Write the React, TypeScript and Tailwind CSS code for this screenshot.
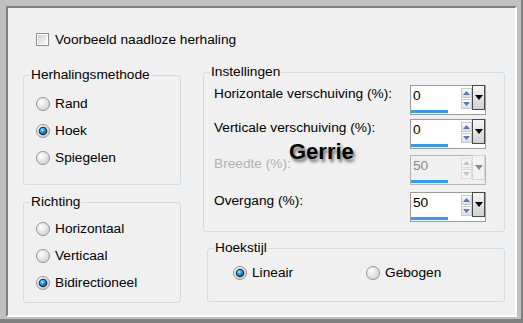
import React from 'react';

const font = { fontFamily: '"Liberation Sans", Arial, sans-serif' };

function Radio({ checked }: { checked?: boolean }) {
    return (
        <svg width="14" height="14" viewBox="0 0 14 14" className="shrink-0">
            <defs>
                <radialGradient id="rOff" cx="35%" cy="35%" r="75%">
                    <stop offset="0%" stopColor="#ffffff" />
                    <stop offset="100%" stopColor="#cfcfcf" />
                </radialGradient>
                <radialGradient id="rOn" cx="40%" cy="35%" r="70%">
                    <stop offset="0%" stopColor="#b8ecff" />
                    <stop offset="45%" stopColor="#2b9be0" />
                    <stop offset="100%" stopColor="#0a4c8c" />
                </radialGradient>
            </defs>
            <circle cx="7" cy="7" r="6.5" fill="url(#rOff)" stroke="#939393" />
            {checked && (
                <>
                    <circle cx="7" cy="7" r="4.3" fill="#1b2c3c" />
                    <circle cx="7" cy="7" r="3.3" fill="url(#rOn)" />
                </>
            )}
        </svg>
    );
}

function RadioRow({ label, checked }: { label: string; checked?: boolean }) {
    return (
        <div className="flex items-center gap-[5px] h-[14px]">
            <Radio checked={checked} />
            <span className="leading-[16px]">{label}</span>
        </div>
    );
}

function Group({ title, className, children }: { title: string; className: string; children: React.ReactNode }) {
    return (
        <div className={`relative border border-[#d3dbe0] rounded-[3px] ${className}`}>
            <span className="absolute left-[6px] top-[-9px] bg-[#f0f0f0] px-[1px] leading-[16px]">{title}</span>
            {children}
        </div>
    );
}

function Arrow({ up, disabled }: { up?: boolean; disabled?: boolean }) {
    return (
        <div className={`w-[11px] h-[10px] border flex items-center justify-center ${disabled ? 'border-[#dcdcdc] bg-[#f4f4f4]' : 'border-[#c3cad3] bg-gradient-to-b from-[#fbfbfb] to-[#dedede]'}`}>
            <svg width="7" height="4" viewBox="0 0 7 4">
                <polygon points={up ? '0,4 7,4 3.5,0' : '0,0 7,0 3.5,4'} fill={disabled ? '#c4c4c4' : '#5876b8'} />
            </svg>
        </div>
    );
}

function Spin({ value, disabled }: { value: string; disabled?: boolean }) {
    return (
        <div className={`w-[76px] h-[30px] border flex flex-col ${disabled ? 'border-[#b5b5b5] bg-[#f0f0f0]' : 'border-[#9c9c9c] bg-white'}`}>
            <div className="flex h-[24px]">
                <div className={`flex-1 pl-[2px] pt-[2px] leading-[16px] ${disabled ? 'text-[#8a8a8a]' : 'text-black'}`}>{value}</div>
                <div className="flex flex-col pt-[2px] gap-[1px]">
                    <Arrow up disabled={disabled} />
                    <Arrow disabled={disabled} />
                </div>
                <div className={`w-[13px] h-[25px] mt-[-1px] border flex items-center justify-center ${disabled ? 'border-[#d6d6d6] bg-[#f2f2f2]' : 'border-[#4a4a4a] bg-gradient-to-b from-[#f6f6f6] to-[#d2d2d2]'}`}>
                    <svg width="8" height="5" viewBox="0 0 8 5">
                        <polygon points="0,0 8,0 4,5" fill={disabled ? '#8a8a8a' : '#000000'} />
                    </svg>
                </div>
            </div>
            <div className="h-[3px] flex">
                <div className="w-[37px] bg-[#3399ff]" />
            </div>
        </div>
    );
}

function SpinRow({ label, value, disabled, className }: { label: string; value: string; disabled?: boolean; className?: string }) {
    return (
        <div className={`flex items-start ${className ?? ''}`}>
            <span className={`mt-[1px] leading-[16px] ${disabled ? 'text-[#b0b0b0]' : ''}`}>{label}</span>
            <div className="ml-auto">
                <Spin value={value} disabled={disabled} />
            </div>
        </div>
    );
}

export default function App() {
    return (
        <div className="w-[523px] h-[323px] bg-[#c0c0c0] border-r-2 border-b-4 border-[#808080] pt-[6px] pl-[6px] pr-[4px] pb-[2px] flex text-[13.7px] text-black" style={font}>
            <div className="relative flex-1 bg-[#f0f0f0] border-2 border-t-[#808080] border-l-[#808080] border-r-white border-b-white pl-[15px] pt-[25px]">
                <div className="ml-[13px] flex items-center gap-[6px] h-[13px]">
                    <svg width="13" height="13" viewBox="0 0 13 13">
                        <defs>
                            <linearGradient id="cb" x1="0" y1="0" x2="1" y2="1">
                                <stop offset="0%" stopColor="#cfcfcf" />
                                <stop offset="100%" stopColor="#fbfbfb" />
                            </linearGradient>
                        </defs>
                        <rect x="0.5" y="0.5" width="12" height="12" fill="#fff" stroke="#8e8f8f" />
                        <rect x="2" y="2" width="9" height="9" fill="url(#cb)" />
                    </svg>
                    <span className="leading-[16px]">Voorbeeld naadloze herhaling</span>
                </div>

                <div className="flex items-start mt-[26px]">
                    <div className="w-[158px] mt-[3px] flex flex-col">
                        <Group title="Herhalingsmethode" className="h-[110px] pt-[21px] pl-[12px] flex flex-col gap-[13px]">
                            <RadioRow label="Rand" />
                            <RadioRow label="Hoek" checked />
                            <RadioRow label="Spiegelen" />
                        </Group>
                        <Group title="Richting" className="mt-[17px] h-[101px] pt-[19px] pl-[12px] flex flex-col gap-[13px]">
                            <RadioRow label="Horizontaal" />
                            <RadioRow label="Verticaal" />
                            <RadioRow label="Bidirectioneel" checked />
                        </Group>
                    </div>

                    <div className="ml-[22px] w-[302px] flex flex-col">
                        <Group title="Instellingen" className="h-[160px] pt-[12px] pl-[10px] pr-[18px] flex flex-col">
                            <SpinRow label="Horizontale verschuiving (%):" value="0" />
                            <SpinRow label="Verticale verschuiving (%):" value="0" className="mt-[4px]" />
                            <SpinRow label="Breedte (%):" value="50" disabled className="mt-[6px]" />
                            <SpinRow label="Overgang (%):" value="50" className="mt-[7px]" />
                        </Group>
                        <Group title="Hoekstijl" className="ml-[4px] mt-[16px] h-[54px] pt-[17px] pl-[25px] flex">
                            <div className="w-[133px]">
                                <RadioRow label="Lineair" checked />
                            </div>
                            <RadioRow label="Gebogen" />
                        </Group>
                    </div>
                </div>

                <span className="absolute left-[281px] top-[131px] text-[22px] font-bold leading-[26px] [text-shadow:2px_3px_3px_rgba(0,0,0,0.55)]">
                    Gerrie
                </span>
            </div>
        </div>
    );
}
